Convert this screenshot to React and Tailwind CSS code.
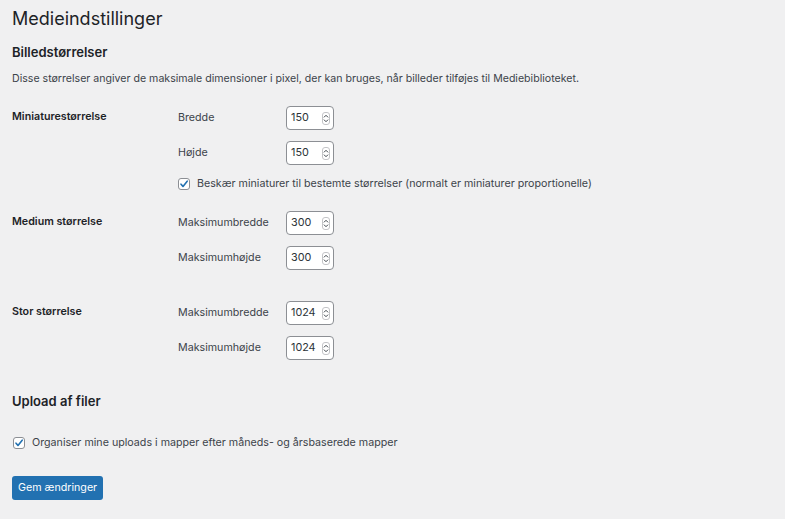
import React from "react";

const font = { fontFamily: "Inter, 'Noto Sans', sans-serif" };

function NumberInput({ value }) {
  return (
    <div className="flex h-[24px] w-[48px] items-center justify-between rounded-[4px] border border-[#8c8f94] bg-white pl-[4px] pr-[3px] text-[10.8px] text-[#2c3338]">
      <span>{value}</span>
      <svg width="8" height="13" viewBox="0 0 8 13" className="text-[#3c434a]">
        <rect x="0.5" y="0.5" width="7" height="12" rx="2.5" fill="none" stroke="#c3c4c7" />
        <path d="M2.2 5.1 L4 3.3 L5.8 5.1" fill="none" stroke="currentColor" strokeWidth="1" strokeLinecap="round" strokeLinejoin="round" />
        <path d="M2.2 7.9 L4 9.7 L5.8 7.9" fill="none" stroke="currentColor" strokeWidth="1" strokeLinecap="round" strokeLinejoin="round" />
      </svg>
    </div>
  );
}

function Checkbox() {
  return (
    <span className="flex h-[12px] w-[12px] items-center justify-center rounded-[3px] border border-[#8c8f94] bg-white">
      <svg width="10" height="10" viewBox="0 0 10 10">
        <path d="M2 5.2 L4 7.4 L8.2 2.2" fill="none" stroke="#2271b1" strokeWidth="1.6" strokeLinecap="round" strokeLinejoin="round" />
      </svg>
    </span>
  );
}

function Field({ label, value }) {
  return (
    <div className="flex h-[24px] items-center">
      <span className="w-[108px] text-[10.7px] text-[#3c434a]">{label}</span>
      <NumberInput value={value} />
    </div>
  );
}

function SizeGroup({ title, fields, children, className }) {
  return (
    <div className={"flex " + (className || "")}>
      <div className="w-[166px] pt-[3px] text-[10.7px] font-semibold text-[#1d2327]">{title}</div>
      <div className="flex flex-col gap-[11px]">
        {fields.map((f) => (
          <Field key={f.label} label={f.label} value={f.value} />
        ))}
        {children}
      </div>
    </div>
  );
}

export default function App() {
  return (
    <div className="min-h-[519px] w-full bg-[#f0f0f1] px-[12px] pt-[7px]" style={font}>
      <h1 className="text-[18px] font-normal leading-[24px] text-[#1d2327]">Medieindstillinger</h1>
      <h2 className="mt-[12px] text-[13px] font-semibold leading-[18px] text-[#1d2327]">Billedstørrelser</h2>
      <p className="mt-[11px] text-[10.6px] leading-[14px] text-[#3c434a]">
        Disse størrelser angiver de maksimale dimensioner i pixel, der kan bruges, når billeder tilføjes til Mediebiblioteket.
      </p>

      <SizeGroup
        className="mt-[20px]"
        title="Miniaturestørrelse"
        fields={[
          { label: "Bredde", value: "150" },
          { label: "Højde", value: "150" },
        ]}
      >
        <label className="flex items-center gap-[7px] text-[10.7px] text-[#3c434a]">
          <Checkbox />
          Beskær miniaturer til bestemte størrelser (normalt er miniaturer proportionelle)
        </label>
      </SizeGroup>

      <SizeGroup
        className="mt-[19px]"
        title="Medium størrelse"
        fields={[
          { label: "Maksimumbredde", value: "300" },
          { label: "Maksimumhøjde", value: "300" },
        ]}
      />

      <SizeGroup
        className="mt-[31px]"
        title="Stor størrelse"
        fields={[
          { label: "Maksimumbredde", value: "1024" },
          { label: "Maksimumhøjde", value: "1024" },
        ]}
      />

      <h2 className="mt-[32px] text-[13px] font-semibold leading-[18px] text-[#1d2327]">Upload af filer</h2>
      <label className="mt-[25px] flex items-center gap-[7px] pl-[1px] text-[10.7px] text-[#3c434a]">
        <Checkbox />
        Organiser mine uploads i mapper efter måneds- og årsbaserede mapper
      </label>

      <button className="mt-[25px] h-[24px] rounded-[3px] bg-[#2271b1] px-[6px] text-[10.7px] text-white">
        Gem ændringer
      </button>
    </div>
  );
}
